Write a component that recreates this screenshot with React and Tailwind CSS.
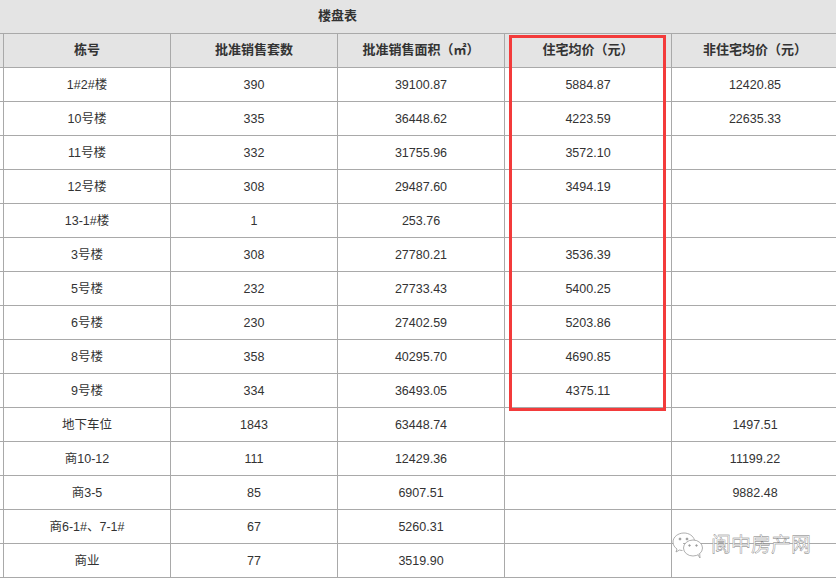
const rows = [
  ["1#2#楼", "390", "39100.87", "5884.87", "12420.85"],
  ["10号楼", "335", "36448.62", "4223.59", "22635.33"],
  ["11号楼", "332", "31755.96", "3572.10", ""],
  ["12号楼", "308", "29487.60", "3494.19", ""],
  ["13-1#楼", "1", "253.76", "", ""],
  ["3号楼", "308", "27780.21", "3536.39", ""],
  ["5号楼", "232", "27733.43", "5400.25", ""],
  ["6号楼", "230", "27402.59", "5203.86", ""],
  ["8号楼", "358", "40295.70", "4690.85", ""],
  ["9号楼", "334", "36493.05", "4375.11", ""],
  ["地下车位", "1843", "63448.74", "", "1497.51"],
  ["商10-12", "111", "12429.36", "", "11199.22"],
  ["商3-5", "85", "6907.51", "", "9882.48"],
  ["商6-1#、7-1#", "67", "5260.31", "", ""],
  ["商业", "77", "3519.90", "", ""],
];

const headers = ["栋号", "批准销售套数", "批准销售面积（㎡）", "住宅均价（元）", "非住宅均价（元）"];

function WeChatMark() {
  return (
    <svg width="32" height="27" viewBox="0 0 32 27" fill="none" stroke="#9a9a9a" strokeWidth="0.8">
      <path d="M12 1C6 1 1 5 1 10c0 3 1.6 5.400 4 7l-1 3 3.500-2c1 .3 2 .5 3 .5" fill="#fff" />
      <path d="M12 1c5 0 9.500 3 10.500 7.200" />
      <ellipse cx="21" cy="16" rx="9.500" ry="8" fill="#fff" />
      <path d="M26 23l2 3-.3-4.500" fill="#fff" />
      <circle cx="8" cy="7" r="1" fill="#9a9a9a" />
      <circle cx="15" cy="7" r="1" fill="#9a9a9a" />
      <circle cx="17.500" cy="13.500" r=".8" fill="#9a9a9a" />
      <circle cx="24.500" cy="13.500" r=".8" fill="#9a9a9a" />
    </svg>
  );
}

export default function App() {
  return (
    <div className="relative h-[582px] w-[836px] overflow-hidden bg-white font-['Liberation_Sans','Noto_Sans_CJK_SC',sans-serif] text-[12.5px] text-[#333] [text-spacing-trim:space-all]">
      {/* the sheet is wider than the window: its first column runs off to the left */}
      <table className="ml-[-164px] w-[1003px] max-w-none table-fixed border-collapse">
        <thead>
          <tr className="h-[33px] bg-[#e4e4e4]">
            <th colSpan={6} className="border-b border-[#a9a9a9] p-0 pb-[2px] text-center text-[13px] font-bold">
              楼盘表
            </th>
          </tr>
          <tr className="h-[34px] bg-[#e4e4e4]">
            <th className="border border-t-0 border-[#a9a9a9] p-0" />
            {headers.map((h) => (
              <th key={h} className="border border-t-0 border-[#a9a9a9] p-0 text-center text-[13px] font-bold">
                {h}
              </th>
            ))}
          </tr>
        </thead>
        <tbody>
          {rows.map((row) => (
            <tr key={row[0]} className="h-[34px]">
              <td className="border border-t-0 border-[#a9a9a9] p-0" />
              {row.map((cell, i) => (
                <td key={i} className="border border-t-0 border-[#a9a9a9] p-0 pt-[2px] text-center">
                  {cell}
                </td>
              ))}
            </tr>
          ))}
        </tbody>
      </table>

      {/* red highlight drawn over the price column */}
      <div className="absolute left-[509px] top-[35px] h-[376px] w-[157px] border-[3px] border-[#f33b3b]" />

      {/* watermark */}
      <div className="absolute left-[672px] top-[532px] flex items-center gap-[7px]">
        <WeChatMark />
        <span className="text-[20px] leading-[27px] text-white [-webkit-text-stroke:0.4px_#777]">阆中房产网</span>
      </div>
    </div>
  );
}
